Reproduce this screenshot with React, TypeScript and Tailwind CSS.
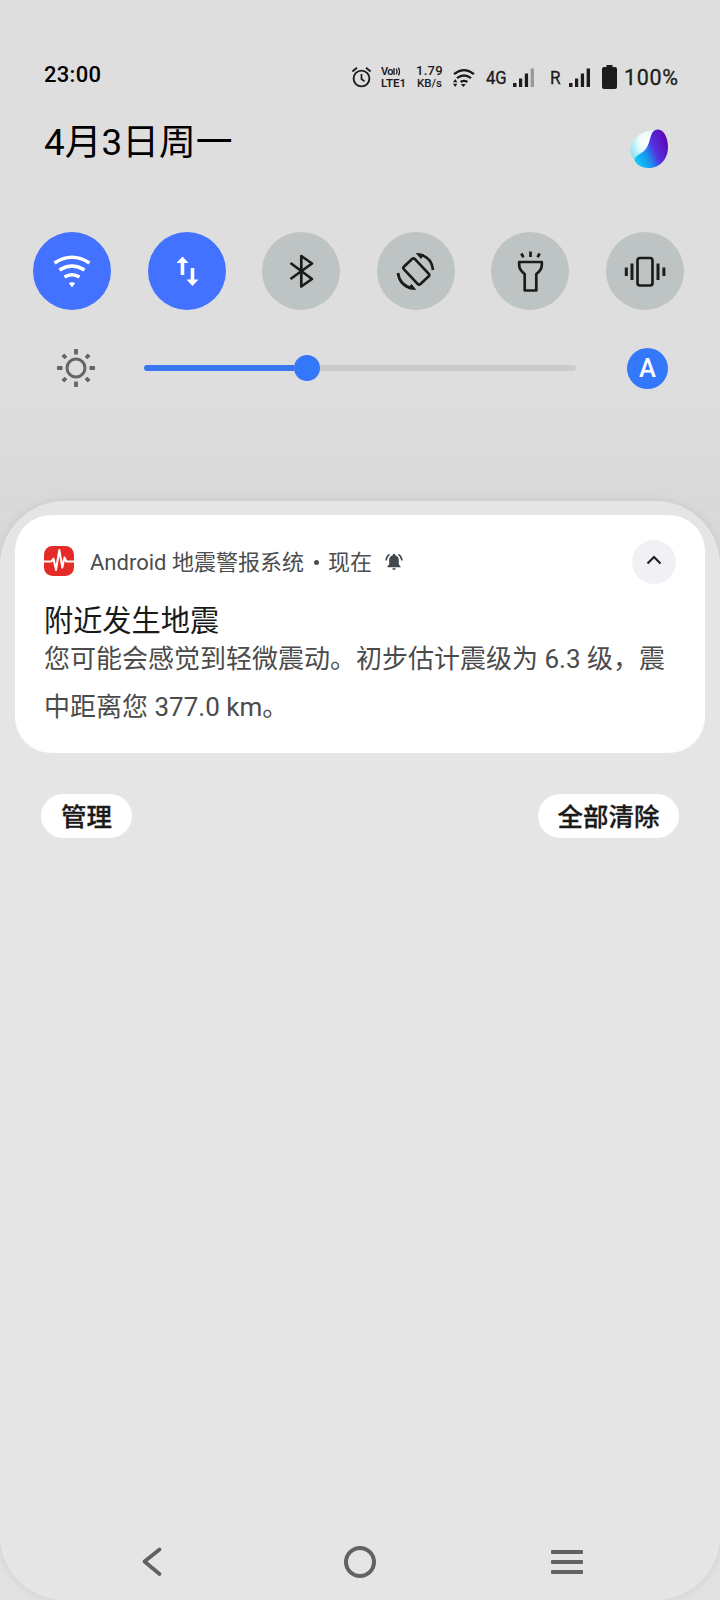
import { ReactNode } from 'react';

export default function App() {
  return (
    <div
      className="flex flex-col w-[720px] h-[1600px] overflow-hidden bg-linear-to-b from-[#dedede] from-24% via-[#d9d9d9] via-31% to-[#e2e2e2] font-['Roboto','Noto_Sans_CJK_SC',sans-serif] text-black"
      lang="zh-CN"
    >
      <div className="flex flex-col h-[501px] shrink-0">
        <StatusBar />
        <DateRow />
        <QuickTiles />
        <Brightness />
      </div>
      <main className="flex flex-col flex-1 rounded-[64px] bg-[#e5e5e5] shadow-[0_0_10px_rgba(0,0,0,0.09)] pt-[14px]">
        <Notification />
        <div className="flex justify-between px-[41px] mt-[41px]">
          <PillButton className="w-[91px]">管理</PillButton>
          <PillButton className="w-[141px]">全部清除</PillButton>
        </div>
        <NavBar />
      </main>
    </div>
  );
}

function StatusBar() {
  return (
    <header className="flex items-center h-[24px] mt-[65px] pl-[44px] text-[#1c1c1c]">
      <span className="w-[60px] text-[22px] leading-[22px] font-medium text-black -mt-[5px] tracking-[0.3px]">
        23:00
      </span>
      <svg className="ml-[247px] w-[21px] h-[22px]" viewBox="0 0 21 22" fill="none" stroke="currentColor" strokeWidth="1.9">
        <circle cx="10.5" cy="12.5" r="7.9" />
        <path d="M10.5 8v5l3 2.3" strokeWidth="1.7" />
        <path d="M1.4 5.6 6 1.8M19.6 5.6 15 1.8" />
      </svg>
      <span className="flex flex-col justify-between ml-[9px] w-[26px] h-[21px] text-[11.5px] leading-[10px] font-semibold">
        <span className="flex items-center h-[10px] text-[11px] tracking-[-0.6px]">
          Vo
          <svg className="w-[8px] h-[9px]" viewBox="0 0 8 9" fill="none" stroke="currentColor" strokeWidth="1.3">
            <path d="M1 1v7M3.2 1.8q1.5 2.7 0 5.4M5.4.6q2.2 3.9 0 7.8" />
          </svg>
        </span>
        <span>LTE1</span>
      </span>
      <span className="flex flex-col items-center ml-[9px] w-[27px] font-medium">
        <span className="text-[13px] leading-[12px] tracking-[0.3px]">1.79</span>
        <span className="text-[11.5px] leading-[13px]">KB/s</span>
      </span>
      <svg className="ml-[9px] mt-[1px] w-[24px] h-[22px]" viewBox="0 0 24 22" fill="none" stroke="currentColor" strokeWidth="2.2">
        <path d="M2 7.2q10-8 20 0M5 11.2q7-5.4 14 0M8.600 15q3.400-2.400 6.800 0" />
        <path d="M1 15.2 3.2 12l2.2 3.2zM1 16.8 3.2 20l2.2-3.2zM8.800 17h5L11.300 20z" fill="currentColor" stroke="none" />
      </svg>
      <span className="ml-[10px] mt-[2px] w-[21px] text-[18.5px] leading-[24px] tracking-[-1.6px]">
        <span className="inline-block origin-left scale-x-90 [-webkit-text-stroke:0.35px_#1c1c1c] tracking-[-0.2px]">
          4G
        </span>
      </span>
      <Signal className="ml-[6px] mt-[1px]" last="#9a9a9a" />
      <span className="ml-[15px] mt-[2px] w-[12px] text-[19px] leading-[24px] [-webkit-text-stroke:0.3px_#1c1c1c]">
        <span className="inline-block origin-left scale-x-90">R</span>
      </span>
      <Signal className="ml-[7px] mt-[1px]" last="#1c1c1c" />
      <svg className="ml-[11px] w-[15px] h-[24px]" viewBox="0 0 15 24" fill="currentColor">
        <path d="M4.500 0h6v2H13q2 0 2 2v18q0 2-2 2H2q-2 0-2-2V4q0-2 2-2h2.500z" />
      </svg>
      <span className="ml-[7px] mt-[2px] text-[21.5px] leading-[24px] tracking-[0.7px] [-webkit-text-stroke:0.3px_#1c1c1c]">
        100%
      </span>
    </header>
  );
}

function Signal({ className, last }: { className: string; last: string }) {
  return (
    <svg className={`w-[22px] h-[20px] ${className}`} viewBox="0 0 22 20" fill="currentColor">
      <rect x="0" y="15" width="3.5" height="4" />
      <rect x="6" y="10.5" width="3.2" height="8.5" />
      <rect x="11.8" y="5.5" width="3.3" height="13.5" />
      <rect x="17.6" y="0.5" width="3.4" height="18.5" fill={last} />
    </svg>
  );
}

function DateRow() {
  return (
    <div className="flex justify-between items-center mt-[25px] h-[58px] pl-[44px] pr-[52px]">
      <h1 className="text-[36.8px] leading-[52px]">4月3日周一</h1>
      <svg className="w-[38px] h-[40px] mt-[12px]" viewBox="0 0 38 40">
        <defs>
          <radialGradient id="pale" cx="0.65" cy="0.4" r="0.75">
            <stop offset="0" stopColor="#fff" />
            <stop offset="0.4" stopColor="#eefcfd" />
            <stop offset="1" stopColor="#86e4f6" />
          </radialGradient>
          <linearGradient id="violet" x1="0.05" y1="0.8" x2="0.95" y2="0.35">
            <stop offset="0" stopColor="#10c8f5" />
            <stop offset="0.35" stopColor="#1990ee" />
            <stop offset="0.62" stopColor="#5330dc" />
            <stop offset="1" stopColor="#5c0cbc" />
          </linearGradient>
        </defs>
        <path d="M26 1C12 0 1 10 .5 21q0 6 4.500 10L25 18z" fill="url(#pale)" />
        <path d="M27.500.5C34 0 38 9 38 18c0 12-8 21-19 21C10 39 4.500 34 4.500 30c1-4 8-5 12-11 4.500-6 3-18 11-18.500z" fill="url(#violet)" />
      </svg>
    </div>
  );
}

function QuickTiles() {
  return (
    <div className="flex justify-between mt-[60px] pl-[33px] pr-[36px]">
      <Tile active>
        <g fill="none" stroke="#fff" strokeWidth="3.6">
          <path d="M21.500 31q17.500-11.500 35 0M26.500 38q12.500-8 25 0M31.500 45q7.500-4.500 15 0" />
        </g>
        <path d="M35.800 51q3.200-1.400 6.400 0L39 55.500z" fill="#fff" />
      </Tile>
      <Tile active>
        <path
          d="M34.500 24.500 40.500 31h-4.200v12h-3.600V31h-4.200zM44.500 54l6-6.500h-4.200V36h-3.600v11.500h-4.200z"
          fill="#fff"
        />
      </Tile>
      <Tile>
        <path d="m28.500 31 21.500 16L39.300 54.500V24l10.700 7.500L28.500 47" />
      </Tile>
      <Tile>
        <rect x="-7.5" y="-12" width="15" height="24" rx="2" transform="translate(39.3 39.5) rotate(-43)" />
        <path d="M41.500 22.500q13 2 14.500 15.500M35.500 56.500Q22.500 53.500 21 41" />
        <path d="m39.500 21.500 7 1-2.500 4zM38.500 57.500l-7-1 3-4z" fill="#1a1d1c" strokeWidth="1" />
      </Tile>
      <Tile>
        <path d="M28.200 30h22.600v3q0 5-5.500 9V58.500H33.700V42q-5.500-4-5.500-9zM39.500 19.500V25M30.300 21.500l2.200 3.800M48.700 21.500 46.500 25.300" />
      </Tile>
      <Tile>
        <rect x="31.500" y="26" width="15" height="27.5" rx="2.5" />
        <path d="M26 31.500V48M52 31.500V48M20.300 35.500V44M57.900 35.500V44" strokeWidth="3" />
      </Tile>
    </div>
  );
}

function Tile({ active = false, children }: { active?: boolean; children: ReactNode }) {
  return (
    <button
      type="button"
      className={`w-[78px] h-[78px] rounded-full ${active ? 'bg-[#4272ff]' : 'bg-[#bec4c3]'}`}
    >
      <svg
        className="w-[78px] h-[78px]"
        viewBox="0 0 78 78"
        fill="none"
        stroke={active ? 'none' : '#1a1d1c'}
        strokeWidth="2.7"
        strokeLinejoin="round"
      >
        {children}
      </svg>
    </button>
  );
}

function Brightness() {
  return (
    <div className="flex items-center mt-[37px] h-[42px] pl-[56px]">
      <svg className="w-[40px] h-[40px]" viewBox="-20 -20 40 40" fill="none" stroke="#656565" strokeWidth="3">
        <circle r="9" />
        <path
          d="M0-19v5.500M0 19v-5.500M-19 0h5.500M19 0h-5.500M-13.200-13.200l3.200 3.200M13.200-13.200 10-10M-13.200 13.200l3.200-3.200M13.200 13.200 10 10"
          strokeWidth="3.8"
        />
      </svg>
      <div className="flex items-center ml-[48px] w-[432px]">
        <div className="w-[150px] h-[6px] rounded-l-full bg-[#3a76f0]" />
        <div className="w-[26px] h-[26px] rounded-full bg-[#3377fb]" />
        <div className="flex-1 h-[6px] rounded-r-full bg-[#cbcbcb]" />
      </div>
      <div className="flex items-center justify-center ml-[51px] w-[41px] h-[41px] pt-[1px] rounded-full bg-[#3377fb] text-white text-[25.5px] leading-none font-medium">
        A
      </div>
    </div>
  );
}

function Notification() {
  return (
    <article className="flex flex-col mx-[15px] h-[238px] shrink-0 rounded-[36px] bg-white px-[29px] pt-[24px]">
      <div className="flex items-center h-[44px] text-[22px] text-[#4b4d4e]">
        <svg className="w-[30px] h-[30px]" viewBox="0 0 30 30">
          <rect width="30" height="30" rx="8.5" fill="#e52b27" />
          <path
            d="M0 15.500h7.500l2-3 2.500 11.500L15.300 4l3 17.500 2.200-10 1.800 4H30"
            fill="none"
            stroke="#fff"
            strokeWidth="2"
            strokeLinejoin="round"
          />
        </svg>
        <span className="ml-[16px] mt-[4px] leading-[32px] whitespace-nowrap">
          Android 地震警报系统
        </span>
        <span className="w-[5px] h-[5px] mt-[2px] ml-[10px] mr-[9px] rounded-full bg-[#4b4d4e]" />
        <span className="mt-[4px] leading-[32px]">现在</span>
        <svg className="ml-[13px] mt-[2px] w-[18px] h-[18px]" viewBox="0 0 18 18" fill="#40474d">
          <path d="M9 .8q1.200 0 1.300 1.400Q13.800 3.200 13.800 7v4.500l1.700 1.700v1H2.500v-1l1.700-1.700V7q0-3.800 3.500-4.800Q7.800.8 9 .8zM7.200 15.200h3.600q-.3 1.800-1.800 1.800t-1.800-1.800z" />
          <path d="M4.500 1.300Q1.300 3.500 1 7.500M13.500 1.300q3.200 2.200 3.500 6.200" fill="none" stroke="#40474d" strokeWidth="1.5" />
        </svg>
        <button type="button" className="flex items-center justify-center ml-auto mt-[1px] w-[44px] h-[44px] rounded-full bg-[#f1f0f5]">
          <svg className="w-[16px] h-[12px] -mt-[3px]" viewBox="0 0 16 12" fill="none" stroke="#222" strokeWidth="2.2">
            <path d="m1.500 9.500 6.500-6.500 6.500 6.500" />
          </svg>
        </button>
      </div>
      <h2 className="mt-[18px] text-[29.2px] leading-[40px] text-[#191919]">附近发生地震</h2>
      <p className="-mt-[6px] w-[640px] text-[26px] leading-[48px] text-[#4b4b4b]">
        您可能会感觉到轻微震动。初步估计震级为 6.3 级，震
        <br />
        中距离您 377.0 km。
      </p>
    </article>
  );
}

function PillButton({ className, children }: { className: string; children: ReactNode }) {
  return (
    <button
      type="button"
      className={`h-[44px] rounded-full bg-white text-[25.5px] leading-[46px] font-medium text-[#1a1a1a] [-webkit-text-stroke:0.3px_#1a1a1a] whitespace-nowrap ${className}`}
    >
      {children}
    </button>
  );
}

function NavBar() {
  return (
    <nav className="flex items-center mt-auto h-[32px] mb-[22px] pl-[141px]">
      <svg className="w-[22px] h-[32px]" viewBox="0 0 22 32" fill="none" stroke="#626262" strokeWidth="3.8" strokeLinecap="round" strokeLinejoin="round">
        <path d="M18.500 3.500 3.500 15.500l15 12.500" />
      </svg>
      <div className="ml-[181px] w-[32px] h-[32px] rounded-full border-4 border-[#626262]" />
      <div className="flex flex-col gap-[6px] ml-[175px]">
        <div className="w-[32px] h-[4px] rounded-[1px] bg-[#626262]" />
        <div className="w-[32px] h-[4px] rounded-[1px] bg-[#626262]" />
        <div className="w-[32px] h-[4px] rounded-[1px] bg-[#626262]" />
      </div>
    </nav>
  );
}
